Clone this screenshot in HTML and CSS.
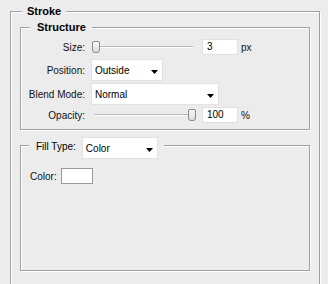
FILE: index.html
```html
<!DOCTYPE html>
<html>
<head>
<meta charset="utf-8">
<link rel="stylesheet" href="styles.css">
</head>
<body>
<fieldset class="group outer">
  <legend class="title">Stroke</legend>
  <fieldset class="group structure">
    <legend class="title sub">Structure</legend>
    <div class="row r16">
      <span class="label">Size:</span>
      <div class="slider"><span class="thumb" style="left:0%"></span></div>
      <div class="field">3</div>
      <span class="unit">px</span>
    </div>
    <div class="row r22 g4">
      <span class="label">Position:</span>
      <div class="select w72"><span>Outside</span><svg class="arrow" width="7" height="4" viewBox="0 0 7 4"><path d="M0 0H7L3.5 4Z" fill="#000"/></svg></div>
    </div>
    <div class="row r22 g2">
      <span class="label">Blend Mode:</span>
      <div class="select w128"><span>Normal</span><svg class="arrow" width="7" height="4" viewBox="0 0 7 4"><path d="M0 0H7L3.5 4Z" fill="#000"/></svg></div>
    </div>
    <div class="row r16 g2">
      <span class="label">Opacity:</span>
      <div class="slider"><span class="thumb" style="left:100%"></span></div>
      <div class="field">100</div>
      <span class="unit">%</span>
    </div>
  </fieldset>
  <fieldset class="group fill">
    <legend class="fill-legend">
      <span class="fill-label">Fill Type:</span>
      <div class="select w76"><span>Color</span><svg class="arrow" width="7" height="4" viewBox="0 0 7 4"><path d="M0 0H7L3.5 4Z" fill="#000"/></svg></div>
    </legend>
    <div class="color-row">
      <span class="color-label">Color:</span>
      <div class="swatch"></div>
    </div>
  </fieldset>
</fieldset>
</body>
</html>
```

FILE: styles.css
```css
html, body {
  margin: 0;
  padding: 0;
  background: #ececec;
  width: 328px;
  height: 284px;
  overflow: hidden;
  font-family: "Liberation Sans", Arial, sans-serif;
  font-size: 10px;
  color: #111;
}

.group {
  box-sizing: border-box;
  border: 1px solid #a0a0a0;
  box-shadow: 1px 1px 0 #fff, inset 1px 1px 0 #fff;
  margin: 0;
  padding: 0;
  min-width: 0;
}

.outer {
  margin: 5px 0 0 10px;
  width: 310px;
  height: 300px;
  padding: 0;
}

.title {
  font-size: 11px;
  font-weight: bold;
  line-height: 13px;
  padding: 0 5px;
  margin-left: 11px;
  background: #ececec;
  color: #000;
}

.structure {
  margin: 3px 9px 0 9px;
  padding: 5px 0 6px 0;
}

.structure .sub {
  padding: 0 6px 0 7px;
  margin-left: 9px;
}

.row {
  display: flex;
  align-items: center;
}

.r16 { height: 16px; }
.r22 { height: 22px; }
.g4 { margin-top: 4px; }
.g2 { margin-top: 2px; }

.label {
  width: 64px;
  text-align: right;
  margin-right: 6px;
  line-height: 13px;
}

.slider {
  position: relative;
  width: 104px;
  height: 14px;
  margin-left: 1px;
  margin-right: 6px;
}

.slider::before {
  content: "";
  position: absolute;
  left: 2px;
  right: 3px;
  top: 6px;
  height: 1px;
  background: #b8b8b8;
  box-shadow: 0 1px 0 #fff;
}

.thumb {
  position: absolute;
  top: 1px;
  width: 8px;
  height: 12px;
  box-sizing: border-box;
  border: 1px solid #8a8a8a;
  border-radius: 2px 2px 3px 3px;
  background: linear-gradient(#fafafa, #dcdcdc);
}

.slider .thumb[style*="100%"] {
  transform: translateX(-100%);
}

.field {
  box-sizing: border-box;
  width: 36px;
  height: 16px;
  background: #fff;
  border: 1px solid #e0e0e0;
  padding-left: 4px;
  line-height: 14px;
  color: #000;
}

.unit {
  margin-left: 3px;
  line-height: 13px;
}

.select {
  box-sizing: border-box;
  height: 22px;
  background: #fff;
  border: 1px solid #e2e2e2;
  display: flex;
  align-items: center;
  justify-content: space-between;
  padding: 0 4px 0 3px;
  color: #000;
}

.select span {
  line-height: 13px;
  margin-top: 1px;
}

.arrow {
  margin-top: 3px;
  display: block;
}

.w72 { width: 72px; }
.w128 { width: 128px; }
.w76 { width: 76px; }

.fill {
  margin: 7px 9px 0 9px;
  height: 134px;
  padding: 14px 0 0 0;
}

.fill-legend {
  display: flex;
  align-items: flex-start;
  height: 17px;
  padding: 0 6px 0 7px;
  margin-left: 8px;
  background: #ececec;
}

.fill-label {
  line-height: 13px;
  margin-top: 3px;
  margin-right: 6px;
  color: #000;
}

.color-row {
  display: flex;
  align-items: center;
  height: 16px;
  margin-left: 9px;
}

.color-label {
  line-height: 13px;
  margin-right: 4px;
}

.swatch {
  box-sizing: border-box;
  width: 32px;
  height: 16px;
  background: #fff;
  border: 1px solid #999;
}
```
